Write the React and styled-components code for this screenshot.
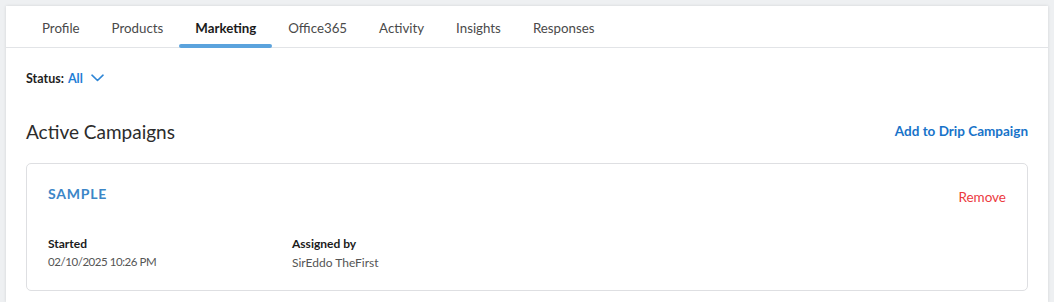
import React, { useState } from 'react';
import styled, { createGlobalStyle } from 'styled-components';

const GlobalStyle = createGlobalStyle`
    * { box-sizing: border-box; }
    body {
        margin: 0;
        background: #eef0f2;
        font-family: Lato, "Open Sans", sans-serif;
        color: #222;
    }
`;

const tabs = ['Profile', 'Products', 'Marketing', 'Office365', 'Activity', 'Insights', 'Responses'];

function App() {
    const [active, setActive] = useState('Marketing');

    return (
        <>
            <GlobalStyle />
            <Page>
                <Panel>
                    <TabBar>
                        {tabs.map((t) => (
                            <Tab key={t} $active={t === active} onClick={() => setActive(t)}>
                                {t}
                            </Tab>
                        ))}
                    </TabBar>

                    <Body>
                        <StatusFilter>
                            Status: <span>All</span>
                            <svg width="13" height="8" viewBox="0 0 13 8" fill="none">
                                <path d="M1 1.2l5.5 5.3L12 1.2" stroke="#2f86d6" strokeWidth="1.6" strokeLinecap="round" strokeLinejoin="round" />
                            </svg>
                        </StatusFilter>

                        <SectionHeader>
                            <h2>Active Campaigns</h2>
                            <LinkButton>Add to Drip Campaign</LinkButton>
                        </SectionHeader>

                        <CampaignCard>
                            <CardTop>
                                <CampaignName>SAMPLE</CampaignName>
                                <RemoveButton>Remove</RemoveButton>
                            </CardTop>
                            <Details>
                                <Detail>
                                    <dt>Started</dt>
                                    <dd className="date">02/10/2025 10:26 PM</dd>
                                </Detail>
                                <Detail>
                                    <dt>Assigned by</dt>
                                    <dd>SirEddo TheFirst</dd>
                                </Detail>
                            </Details>
                        </CampaignCard>
                    </Body>
                </Panel>
            </Page>
        </>
    );
}

const Page = styled.div`
    padding: 6px 6px 0 6px;
    height: 302px;
    overflow: hidden;
`;

const Panel = styled.div`
    background: #fff;
    height: 100%;
    box-shadow: 0 0 3px rgba(0, 0, 0, 0.12);
`;

const TabBar = styled.nav`
    display: flex;
    padding: 0 20px;
    height: 42px;
    border-bottom: 1px solid #e2e4e7;
`;

const Tab = styled.div`
    position: relative;
    display: flex;
    align-items: center;
    padding: 2px 16px 0 16px;
    font-size: 13.3px;
    cursor: pointer;
    color: ${(p) => (p.$active ? '#1b1b1b' : '#4a4a4a')};
    font-weight: ${(p) => (p.$active ? 700 : 400)};

    &::after {
        content: '';
        position: absolute;
        left: 0;
        right: 0;
        bottom: -1px;
        height: 4px;
        border-radius: 2px;
        background: ${(p) => (p.$active ? '#5ba3dd' : 'transparent')};
    }
`;

const Body = styled.div`
    padding: 20px 20px 0 20px;
`;

const StatusFilter = styled.div`
    display: flex;
    align-items: center;
    gap: 4px;
    font-size: 12.5px;
    font-weight: 700;
    color: #1e1e1e;
    height: 20px;

    span {
        color: #1d7dd6;
        margin-right: 4px;
    }
`;

const SectionHeader = styled.div`
    display: flex;
    align-items: center;
    justify-content: space-between;
    margin-top: 28px;
    height: 30px;

    h2 {
        margin: 0;
        font-size: 19px;
        font-weight: 400;
        color: #2c2c2c;
    }
`;

const LinkButton = styled.span`
    font-size: 13.5px;
    font-weight: 700;
    color: #1873c9;
    cursor: pointer;
`;

const CampaignCard = styled.div`
    margin-top: 17px;
    border: 1px solid #dedfe2;
    border-radius: 5px;
    height: 128px;
    padding: 21px 21px 0 21px;
`;

const CardTop = styled.div`
    display: flex;
    justify-content: space-between;
    align-items: flex-start;
`;

const CampaignName = styled.div`
    font-size: 14px;
    font-weight: 700;
    letter-spacing: 0.8px;
    color: #3c86c7;
`;

const RemoveButton = styled.span`
    font-size: 13.5px;
    color: #ec3a40;
    margin-top: 4px;
    cursor: pointer;
`;

const Details = styled.dl`
    display: grid;
    grid-template-columns: 244px 1fr;
    margin: 31px 0 0 0;
`;

const Detail = styled.div`
    dt {
        font-size: 12px;
        font-weight: 700;
        color: #1b1b1b;
    }

    dd {
        margin: 4px 0 0 0;
        font-size: 12px;
        color: #555;
    }

    dd.date {
        font-size: 11.5px;
        letter-spacing: -0.45px;
    }
`;

export default App;
